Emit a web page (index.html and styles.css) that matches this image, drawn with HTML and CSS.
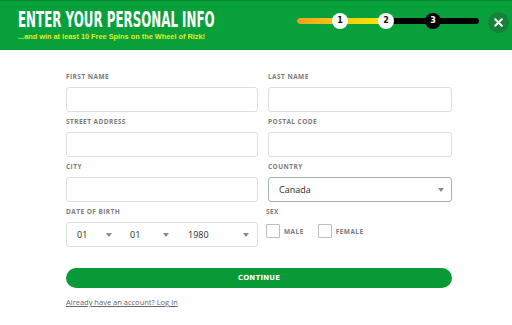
FILE: index.html
```html
<!DOCTYPE html>
<html>
<head>
<meta charset="utf-8">
<link rel="stylesheet" href="styles.css">
</head>
<body>
<header class="header">
  <div class="heading">
    <h1 class="title"><span class="title-text">ENTER YOUR PERSONAL INFO</span></h1>
    <p class="subtitle"><span class="subtitle-text">...and win at least 10 Free Spins on the Wheel of Rizk!</span></p>
  </div>
  <div class="progress">
    <div class="track"><div class="track-done"></div></div>
    <span class="step step-1">1</span>
    <span class="step step-2">2</span>
    <span class="step step-3 current">3</span>
  </div>
  <button class="close" aria-label="Close">
    <svg width="9" height="9" viewBox="0 0 9 9"><path d="M1.2 1.2 L7.8 7.8 M7.8 1.2 L1.2 7.8" stroke="#fff" stroke-width="2" stroke-linecap="round"/></svg>
  </button>
</header>

<main class="form">
  <div class="grid">
    <div class="field">
      <label class="label">First name</label>
      <div class="input"></div>
    </div>
    <div class="field">
      <label class="label">Last name</label>
      <div class="input"></div>
    </div>
    <div class="field">
      <label class="label">Street address</label>
      <div class="input"></div>
    </div>
    <div class="field">
      <label class="label">Postal code</label>
      <div class="input"></div>
    </div>
    <div class="field">
      <label class="label">City</label>
      <div class="input"></div>
    </div>
    <div class="field">
      <label class="label">Country</label>
      <div class="input select country"><span class="value">Canada</span><span class="arrow"></span></div>
    </div>
    <div class="field">
      <label class="label">Date of birth</label>
      <div class="input dob">
        <div class="dob-part p1"><span class="value">01</span><span class="arrow"></span></div>
        <div class="dob-part p2"><span class="value">01</span><span class="arrow"></span></div>
        <div class="dob-part p3"><span class="value">1980</span><span class="arrow"></span></div>
      </div>
    </div>
    <div class="field sex">
      <label class="label">Sex</label>
      <div class="checks">
        <span class="check"><span class="box"></span><span class="check-label">Male</span></span>
        <span class="check"><span class="box"></span><span class="check-label">Female</span></span>
      </div>
    </div>
  </div>
  <button class="continue">CONTINUE</button>
  <a class="login" href="#">Already have an account? Log In</a>
</main>
</body>
</html>
```

FILE: styles.css
```css
* { box-sizing: border-box; }
html, body { margin: 0; padding: 0; background: #fff; }
body { font-family: "Open Sans", "DejaVu Sans", sans-serif; width: 512px; height: 325px; overflow: hidden; }

.header {
  height: 50px;
  background: #08a03b;
  border-top: 1px solid #0a8733;
  display: flex;
  align-items: flex-start;
  padding: 0 3px 0 18px;
}
.heading { width: 240px; }
.title {
  margin: 0;
  padding-top: 7px;
  height: 30px;
  font-family: "DejaVu Sans Condensed", "DejaVu Sans", sans-serif;
  font-weight: bold;
  font-size: 22px;
  line-height: 24px;
  color: #fff;
  white-space: nowrap;
}
.title-text { display: inline-block; transform: scaleX(0.6); transform-origin: left center; }
.subtitle {
  margin: 1px 0 0;
  font-family: "Liberation Sans", Arial, sans-serif;
  font-weight: bold;
  font-size: 7.5px;
  line-height: 9px;
  color: #e4ef1c;
  white-space: nowrap;
}
.subtitle-text { display: inline-block; transform: scaleX(0.98); transform-origin: left center; }

.progress {
  position: relative;
  width: 182px;
  height: 16px;
  margin: 12px 0 0 auto;
}
.track {
  position: absolute;
  left: 0; right: 0; top: 5px;
  height: 6px;
  border-radius: 3px;
  background: #000;
}
.track-done {
  width: 90px;
  height: 6px;
  border-radius: 3px 0 0 3px;
  background: linear-gradient(90deg, #ef9e22 0%, #f4c511 40%, #f6ea02 100%);
}
.step {
  position: absolute;
  top: 0;
  width: 16px; height: 16px;
  margin-left: -8px;
  border-radius: 50%;
  background: #fff;
  color: #111;
  font-family: "DejaVu Sans", sans-serif;
  font-weight: bold;
  font-size: 8px;
  line-height: 16px;
  text-align: center;
}
.step-1 { left: 43px; }
.step-2 { left: 89px; }
.step-3 { left: 136px; }
.step.current { background: #000; color: #fff; }

.close {
  width: 21px; height: 21px;
  margin: 11px 0 0 9px;
  padding: 0;
  border: 0;
  border-radius: 50%;
  background: #17803a;
  display: flex;
  align-items: center;
  justify-content: center;
}

.form { width: 386px; margin: 22px 0 0 66px; }
.grid {
  display: grid;
  grid-template-columns: 192px 184px;
  column-gap: 10px;
  row-gap: 5px;
}
.field { display: flex; flex-direction: column; }
.label {
  display: block;
  height: 10px;
  margin-bottom: 5px;
  font-family: "Open Sans", sans-serif;
  font-weight: bold;
  font-size: 6.5px;
  line-height: 10px;
  letter-spacing: 0.45px;
  text-transform: uppercase;
  color: #7b7b7b;
}
.input {
  height: 25px;
  border: 1px solid #dedede;
  border-radius: 3px;
  background: #fff;
}
.select { display: flex; align-items: center; justify-content: space-between; padding: 0 7px 0 10px; }
.country { border-color: #9fb6a8; }
.value { font-family: "Open Sans", sans-serif; font-size: 9px; color: #2b2b2b; }
.arrow {
  width: 0; height: 0;
  border-left: 3px solid transparent;
  border-right: 3px solid transparent;
  border-top: 4px solid #8a8a8a;
}
.dob { display: grid; grid-template-columns: 53px 58px 1fr; }
.dob-part { display: flex; align-items: center; justify-content: space-between; padding-left: 10px; padding-right: 8px; }
.p2 { padding-right: 9px; }

.sex { margin-left: -2px; }
.checks { display: flex; gap: 14px; margin-top: 2px; }
.check { display: flex; align-items: center; gap: 4px; }
.box { width: 14px; height: 14px; border: 1px solid #bdbdbd; border-radius: 1px; background: #fff; }
.check-label {
  font-family: "Open Sans", sans-serif;
  font-weight: bold;
  font-size: 6.5px;
  letter-spacing: 0.45px;
  text-transform: uppercase;
  color: #7b7b7b;
}

.continue {
  display: block;
  width: 100%;
  height: 20px;
  margin-top: 21px;
  border: 0;
  border-radius: 10px;
  background: #079a37;
  color: #fff;
  font-family: "DejaVu Sans", sans-serif;
  font-weight: bold;
  font-size: 7px;
  letter-spacing: 0.2px;
  padding: 0;
}
.login {
  display: inline-block;
  margin-top: 8px;
  font-family: "Open Sans", sans-serif;
  font-size: 7.5px;
  color: #666;
  text-decoration: underline;
}
```
